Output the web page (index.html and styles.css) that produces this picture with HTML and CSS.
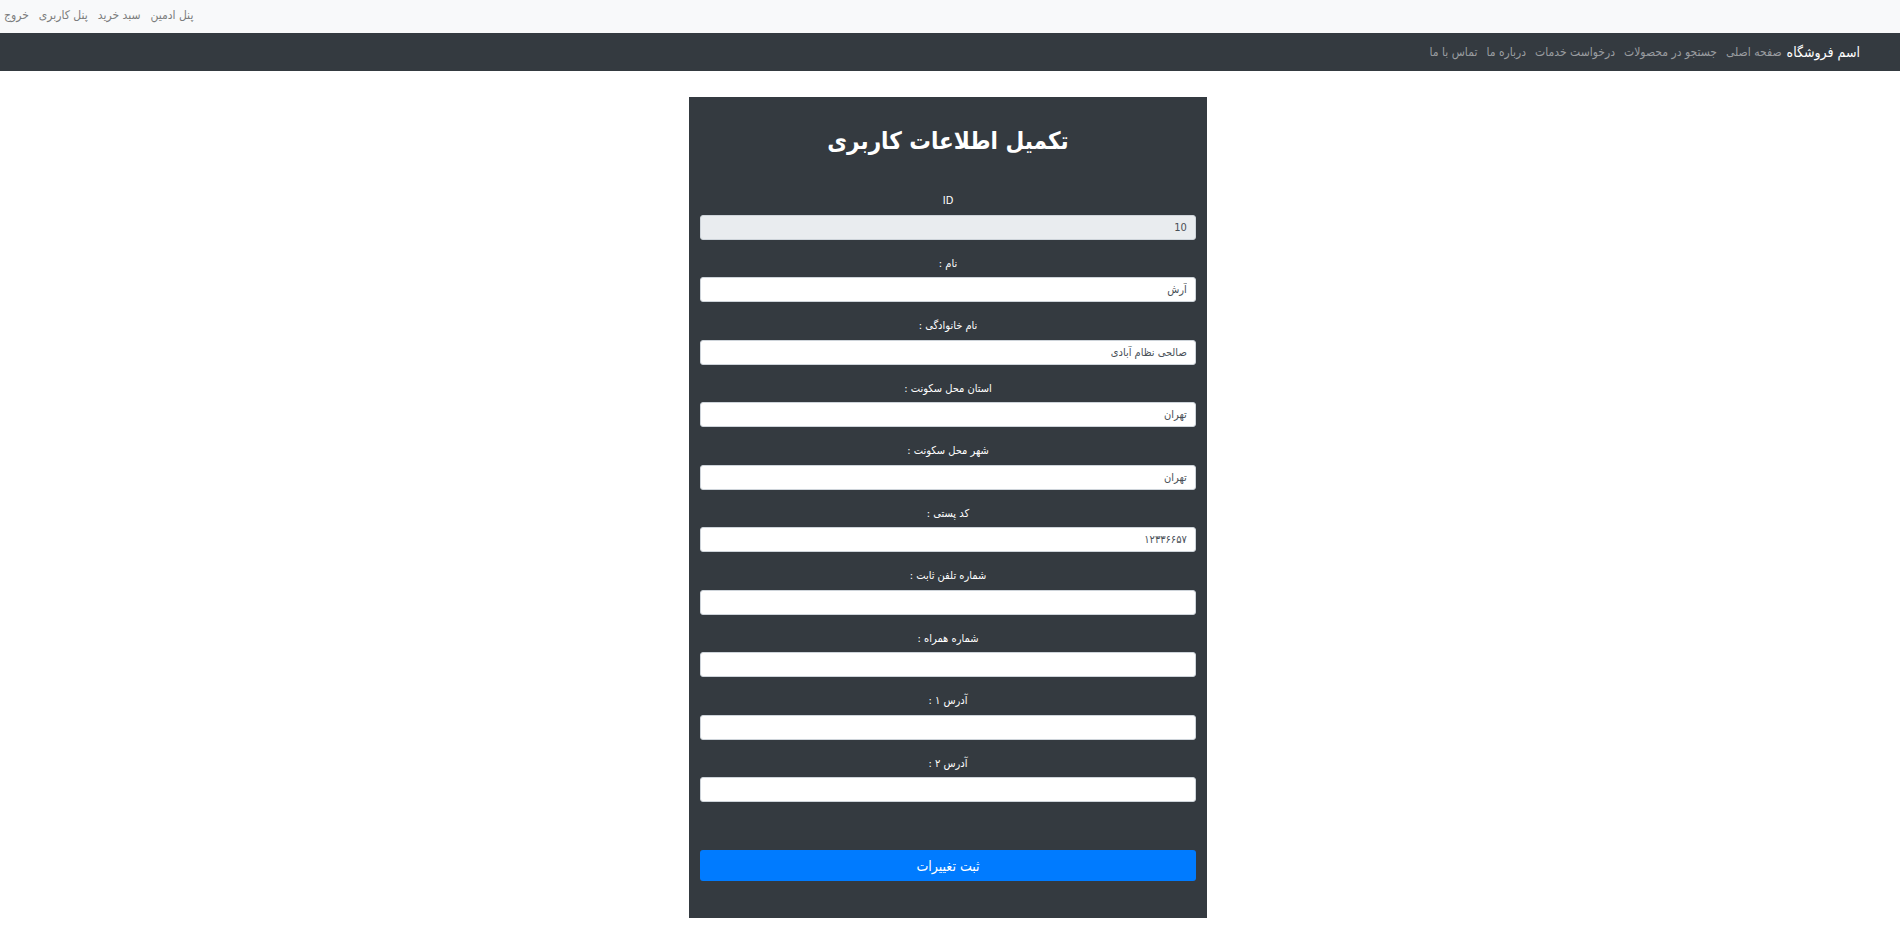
FILE: index.html
```
<!DOCTYPE html>
<html lang="fa" dir="rtl">
<head>
<meta charset="utf-8">
<title>تکمیل اطلاعات کاربری</title>
<link rel="stylesheet" href="styles.css">
</head>
<body>
<nav class="topbar">
  <a href="#">پنل ادمین</a>
  <a href="#">سبد خرید</a>
  <a href="#">پنل کاربری</a>
  <a href="#">خروج</a>
</nav>
<nav class="navbar">
  <a class="brand" href="#">اسم فروشگاه</a>
  <a href="#">صفحه اصلی</a>
  <a href="#">جستجو در محصولات</a>
  <a href="#">درخواست خدمات</a>
  <a href="#">درباره ما</a>
  <a href="#">تماس با ما</a>
</nav>
<main class="page">
  <section class="card">
    <h1>تکمیل اطلاعات کاربری</h1>
    <form class="form">
      <div class="field"><label for="id">ID</label><input id="id" type="text" value="10" disabled></div>
      <div class="field"><label for="name">نام :</label><input id="name" type="text" value="آرش"></div>
      <div class="field"><label for="family">نام خانوادگی :</label><input id="family" type="text" value="صالحی نظام آبادی"></div>
      <div class="field"><label for="state">استان محل سکونت :</label><input id="state" type="text" value="تهران"></div>
      <div class="field"><label for="city">شهر محل سکونت :</label><input id="city" type="text" value="تهران"></div>
      <div class="field"><label for="zip">کد پستی :</label><input id="zip" type="text" value="۱۲۳۳۶۶۵۷"></div>
      <div class="field"><label for="phone">شماره تلفن ثابت :</label><input id="phone" type="text"></div>
      <div class="field"><label for="mobile">شماره همراه :</label><input id="mobile" type="text"></div>
      <div class="field"><label for="addr1">آدرس ۱ :</label><input id="addr1" type="text"></div>
      <div class="field"><label for="addr2">آدرس ۲ :</label><input id="addr2" type="text"></div>
      <button class="submit" type="submit">ثبت تغییرات</button>
    </form>
  </section>
</main>
</body>
</html>
```
FILE: styles.css
```
* { box-sizing: border-box; }
body {
  margin: 0;
  background: #fff;
  font-family: "DejaVu Sans Condensed", "DejaVu Sans", sans-serif;
  font-size: 11px;
  line-height: 1.5;
}
a { text-decoration: none; }
.topbar {
  display: flex;
  justify-content: flex-end;
  gap: 10px;
  padding: 6px 4px 9px;
  background: #f8f9fa;
}
.topbar a { color: #7c7d7d; font-size: 12px; }
.navbar {
  display: flex;
  align-items: center;
  gap: 9px;
  min-height: 38px;
  padding: 0 40px;
  background: #343a40;
}
.navbar a { color: #9a9da0; font-size: 12px; }
.navbar .brand { margin-left: -4px; color: #fff; font-size: 14px; }
.page { padding: 26px 4px 26px 0; }
.page { padding-left: 0; }
.card {
  width: 27.3%;
  min-width: 320px;
  margin: 0 auto;
  padding: 24px 11px 37px;
  background: #343a40;
  color: #fff;
  text-align: center;
}
h1 { margin: 0 0 32px; font-size: 24px; line-height: 40px; font-weight: 700; }
.field { display: flex; flex-direction: column; gap: 5px; margin-bottom: 16px; }
.field input {
  height: 25px;
  padding: 0 8px;
  border: 1px solid #ced4da;
  border-radius: 3px;
  background: #fff;
  color: #495057;
  font-family: inherit;
  font-size: 11px;
}
.field input:disabled { background: #e9ecef; }
.submit {
  width: 100%;
  height: 31px;
  margin-top: 32px;
  border: 0;
  border-radius: 3px;
  background: #007bff;
  color: #fff;
  font-family: inherit;
  font-size: 14px;
}
```
